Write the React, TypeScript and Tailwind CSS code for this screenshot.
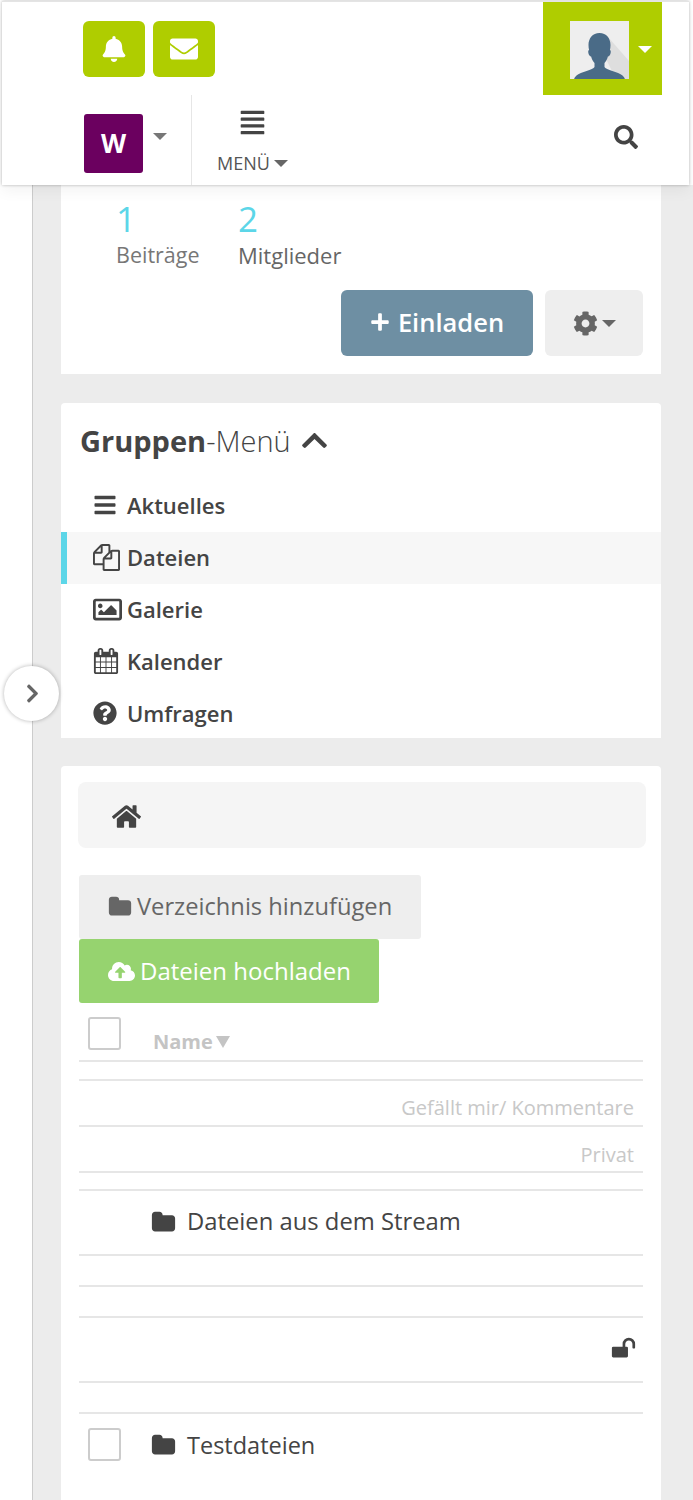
import React from "react";
import {
  FaAlignJustify,
  FaBars,
  FaBell,
  FaChevronRight,
  FaChevronUp,
  FaCloudUploadAlt,
  FaCog,
  FaEnvelope,
  FaHome,
  FaPlus,
  FaQuestionCircle,
  FaRegImage,
  FaSearch,
} from "react-icons/fa";

// old font-awesome shapes, the current package redrew these
const paths = {
  files:
    "M1696 384q40 0 68 28t28 68v1216q0 40-28 68t-68 28h-960q-40 0-68-28t-28-68v-288h-544q-40 0-68-28t-28-68v-672q0-40 20-88t48-76l408-408q28-28 76-48t88-20h416q40 0 68 28t28 68v328q68-40 128-40h416zm-544 213l-299 299h299v-299zm-640-384l-299 299h299v-299zm196 647l316-316v-416h-384v416q0 40-28 68t-68 28h-416v640h512v-256q0-40 20-88t48-76zm956 804v-1152h-384v416q0 40-28 68t-68 28h-416v640h896z",
  calendar:
    "M192 1664h288v-288h-288v288zm352 0h320v-288h-320v288zm-352-352h288v-320h-288v320zm352 0h320v-320h-320v320zm-352-384h288v-288h-288v288zm736 736h320v-288h-320v288zm-384-736h320v-288h-320v288zm768 736h288v-288h-288v288zm-384-352h320v-320h-320v320zm-352-864v-288q0-13-9.500-22.500t-22.500-9.500h-64q-13 0-22.500 9.500t-9.500 22.500v288q0 13 9.500 22.500t22.500 9.500h64q13 0 22.500-9.500t9.500-22.500zm736 864h288v-320h-288v320zm-384-384h320v-288h-320v288zm384 0h288v-288h-288v288zm32-480v-288q0-13-9.500-22.500t-22.500-9.500h-64q-13 0-22.500 9.500t-9.500 22.500v288q0 13 9.500 22.500t22.500 9.500h64q13 0 22.500-9.500t9.500-22.500zm384-64v1280q0 52-38 90t-90 38h-1408q-52 0-90-38t-38-90v-1280q0-52 38-90t90-38h128v-96q0-66 47-113t113-47h64q66 0 113 47t47 113v96h384v-96q0-66 47-113t113-47h64q66 0 113 47t47 113v96h128q52 0 90 38t38 90z",
  folder:
    "M1728 608v704q0 92-66 158t-158 66h-1216q-92 0-158-66t-66-158v-960q0-92 66-158t158-66h320q92 0 158 66t66 158v32h672q92 0 158 66t66 158z",
  unlock:
    "M1728 576v256q0 26-19 45t-45 19h-64q-26 0-45-19t-19-45v-256q0-106-75-181t-181-75-181 75-75 181v192h96q40 0 68 28t28 68v576q0 40-28 68t-68 28h-960q-40 0-68-28t-28-68v-576q0-40 28-68t68-28h672v-192q0-185 131.500-316.500t316.500-131.500 316.500 131.500 131.500 316.500z",
};

const OldIcon = ({ d, size }: { d: string; size: number }) => (
  <svg viewBox="0 0 1792 1792" width={size} height={size} fill="currentColor" className="shrink-0">
    <path d={d} />
  </svg>
);

const menuItems = [
  { label: "Aktuelles", icon: <FaBars size={24} /> },
  { label: "Dateien", icon: <OldIcon d={paths.files} size={27} />, active: true },
  { label: "Galerie", icon: <FaRegImage size={29} /> },
  { label: "Kalender", icon: <OldIcon d={paths.calendar} size={26} /> },
  { label: "Umfragen", icon: <FaQuestionCircle size={24} /> },
];

const Caret = ({ className }: { className: string }) => (
  <span
    className={`inline-block h-0 w-0 border-x-[7px] border-t-[7px] border-x-transparent ${className}`}
  />
);

const Avatar = () => (
  <svg viewBox="0 0 59 58" className="h-[58px] w-[59px]">
    <rect width="59" height="58" fill="#eeeeee" />
    <path d="M38 16 L59 40 V58 H46 L32 30 Z" fill="#dedede" />
    <path
      d="M29.500 12c-7 0-11 5.500-11 12 0 2 .2 3.500.6 5-1.400.4-1 3.500.4 5.500.6.8 1.200 1 1.600 1 .7 3 2 5 3.400 6.500v4c-1 3-14 5-18 8.500-1.500 1.500-2 2-2.500 4h51c-.5-2-1-2.500-2.500-4-4-3.500-17-5.500-18-8.500v-4c1.400-1.500 2.700-3.500 3.400-6.500.4 0 1-.2 1.600-1 1.400-2 1.800-5.100.4-5.500.4-1.500.6-3 .6-5 0-6.500-4-12-11-12z"
      fill="#4a6b87"
    />
  </svg>
);

const FileRow = ({ children, h }: { children?: React.ReactNode; h: string }) => (
  <div className={`flex items-center border-b-2 border-[#e6e6e6] ${h}`}>{children}</div>
);

export default function App() {
  return (
    <div
      className="relative h-[1500px] overflow-hidden bg-white text-[#444]"
      style={{ fontFamily: '"Open Sans", sans-serif' }}
    >
      {/* Top bar */}
      <header className="relative z-10 mx-[2px] mt-[1px] h-[184px] w-[687px] border-t border-[#e4e4e4] bg-white shadow-[0_0_3px_rgba(0,0,0,0.28),0_6px_14px_rgba(0,0,0,0.05)]">
        <div className="flex h-[93px] items-start pl-[81px]">
          <div className="mt-[19px] flex gap-2">
            <button className="flex h-[56px] w-[62px] items-center justify-center rounded-md bg-[#afcd00] text-white">
              <FaBell size={26} />
            </button>
            <button className="flex h-[56px] w-[62px] items-center justify-center rounded-md bg-[#afcd00] text-white">
              <FaEnvelope size={28} />
            </button>
          </div>
          <div className="ml-auto mr-[27px] flex h-[93px] w-[119px] items-start bg-[#afcd00] pl-[27px] pt-[19px]">
            <Avatar />
            <Caret className="ml-[9px] mt-[25px] border-t-white" />
          </div>
        </div>
        <div className="flex h-[90px]">
          <div className="flex w-[190px] items-center border-r border-[#e6e6e6] pl-[82px] pt-[7px]">
            <div className="flex h-[59px] w-[59px] items-center justify-center rounded-[3px] bg-[#6b005f] text-[26px] font-bold text-white">
              W
            </div>
            <Caret className="ml-[10px] -translate-y-[7px] border-t-[#777]" />
          </div>
          <div className="flex w-[121px] flex-col items-center pt-[14px]">
            <FaAlignJustify size={27} className="text-[#444]" />
            <div className="mt-[15px] flex items-center gap-[4px] text-[18px] leading-[24px] text-[#555]">
              MENÜ
              <Caret className="border-t-[#666]" />
            </div>
          </div>
          <div className="ml-auto mr-[51px] pt-[30px]">
            <FaSearch size={24} className="text-[#444]" />
          </div>
        </div>
      </header>

      {/* Sidebar toggle */}
      <button className="absolute left-[4px] top-[666px] z-10 flex h-[55px] w-[55px] items-center justify-center rounded-full bg-white pl-[2px] text-[#666] shadow-[0_0_4px_rgba(0,0,0,0.3)]">
        <FaChevronRight size={21} />
      </button>

      <div className="flex">
        <div className="w-[33px] shrink-0 border-r border-[#ccc]" />
        <main className="flex h-[1315px] flex-1 flex-col bg-[#ececec] pl-[28px] pr-[32px]">
          {/* Group stats */}
          <section className="h-[189px] shrink-0 bg-white">
            <div className="flex pl-[55px] pt-[12px]">
              <div className="w-[122px]">
                <div className="text-[35px] leading-[44px] text-[#5cd6e8]">1</div>
                <div className="text-[21.500px] leading-[28px] text-[#777]">Beiträge</div>
              </div>
              <div>
                <div className="text-[35px] leading-[44px] text-[#5cd6e8]">2</div>
                <div className="text-[22px] leading-[28px] text-[#666]">Mitglieder</div>
              </div>
            </div>
            <div className="mt-[21px] flex justify-end gap-3 pr-[18px]">
              <button className="flex h-[66px] w-[192px] items-center justify-center gap-[8px] rounded-md bg-[#6e8fa3] pb-[2px] text-[25.500px] font-semibold text-white">
                <FaPlus size={20} />
                Einladen
              </button>
              <button className="flex h-[66px] w-[98px] items-center justify-center gap-1 rounded-md bg-[#eeeeee] text-[#666]">
                <FaCog size={25} />
                <Caret className="border-t-[#666]" />
              </button>
            </div>
          </section>

          {/* Group menu */}
          <section className="mt-[29px] h-[335px] shrink-0 rounded-t-[4px] bg-white">
            <h2 className="flex h-[77px] items-center pb-[2px] pl-[19px] text-[29px] text-[#444]">
              <span className="font-bold">Gruppen</span>
              <span className="font-light">-Menü</span>
              <FaChevronUp size={29} className="ml-[9px]" />
            </h2>
            <ul>
              {menuItems.map((item) => (
                <li
                  key={item.label}
                  className={`flex h-[52px] items-center border-l-[6px] pb-[2px] text-[22px] font-semibold ${
                    item.active ? "border-[#5cd6e8] bg-[#f7f7f7]" : "border-transparent"
                  }`}
                >
                  <span className="flex w-[60px] items-center justify-start pl-[26px]">
                    {item.icon}
                  </span>
                  <span>{item.label}</span>
                </li>
              ))}
            </ul>
          </section>

          {/* File browser */}
          <section className="mt-[28px] flex-1 rounded-t-[4px] bg-white pl-[18px] pr-[18px] pt-[16px]">
            <div className="ml-[-1px] mr-[-3px] flex h-[66px] items-center rounded-lg bg-[#f5f5f5] pl-[34px] pt-[3px]">
              <FaHome size={29} className="text-[#444]" />
            </div>
            <button className="mt-[27px] flex h-[64px] w-[342px] items-center gap-[5px] rounded-[3px] bg-[#eeeeee] pl-[29px] text-[23.700px] text-[#666]">
              <OldIcon d={paths.folder} size={24} />
              Verzeichnis hinzufügen
            </button>
            <button className="flex h-[64px] w-[300px] items-center gap-[5px] rounded-[3px] bg-[#96d36f] pl-[29px] text-[24px] text-white">
              <FaCloudUploadAlt size={27} />
              Dateien hochladen
            </button>
            <FileRow h="h-[59px] items-start">
              <span className="ml-[9px] mt-[14px] h-[33px] w-[33px] rounded-[3px] border-2 border-[#ccc] bg-white" />
              <span className="ml-[32px] mt-[26px] flex items-center gap-[3px] text-[20px] font-bold leading-[26px] text-[#c4c4c4]">
                Name
                <span className="h-0 w-0 border-x-[7px] border-t-[12px] border-x-transparent border-t-[#c4c4c4]" />
              </span>
            </FileRow>
            <FileRow h="h-[19px]" />
            <FileRow h="h-[46px] justify-end pr-[9px] pt-[10px] text-[20px] text-[#c8c8c8]">
              Gefällt mir/ Kommentare
            </FileRow>
            <FileRow h="h-[46px] justify-end pr-[9px] pt-[11px] text-[20px] text-[#c8c8c8]">
              Privat
            </FileRow>
            <FileRow h="h-[18px]" />
            <FileRow h="h-[65px] pb-[1px] pl-[72px] text-[23.800px] text-[#444]">
              <OldIcon d={paths.folder} size={25} />
              <span className="ml-[11px]">Dateien aus dem Stream</span>
            </FileRow>
            <FileRow h="h-[31px]" />
            <FileRow h="h-[31px]" />
            <FileRow h="h-[65px] justify-end pb-[2px] pr-[7px]">
              <OldIcon d={paths.unlock} size={25} />
            </FileRow>
            <FileRow h="h-[31px]" />
            <div className="flex h-[60px] items-center pl-[9px] text-[23.500px] text-[#444]">
              <span className="h-[33px] w-[33px] rounded-[3px] border-2 border-[#ccc] bg-white" />
              <span className="ml-[30px] pt-[2px]">
                <OldIcon d={paths.folder} size={25} />
              </span>
              <span className="ml-[11px] pt-[3px]">Testdateien</span>
            </div>
          </section>
        </main>
      </div>
    </div>
  );
}
